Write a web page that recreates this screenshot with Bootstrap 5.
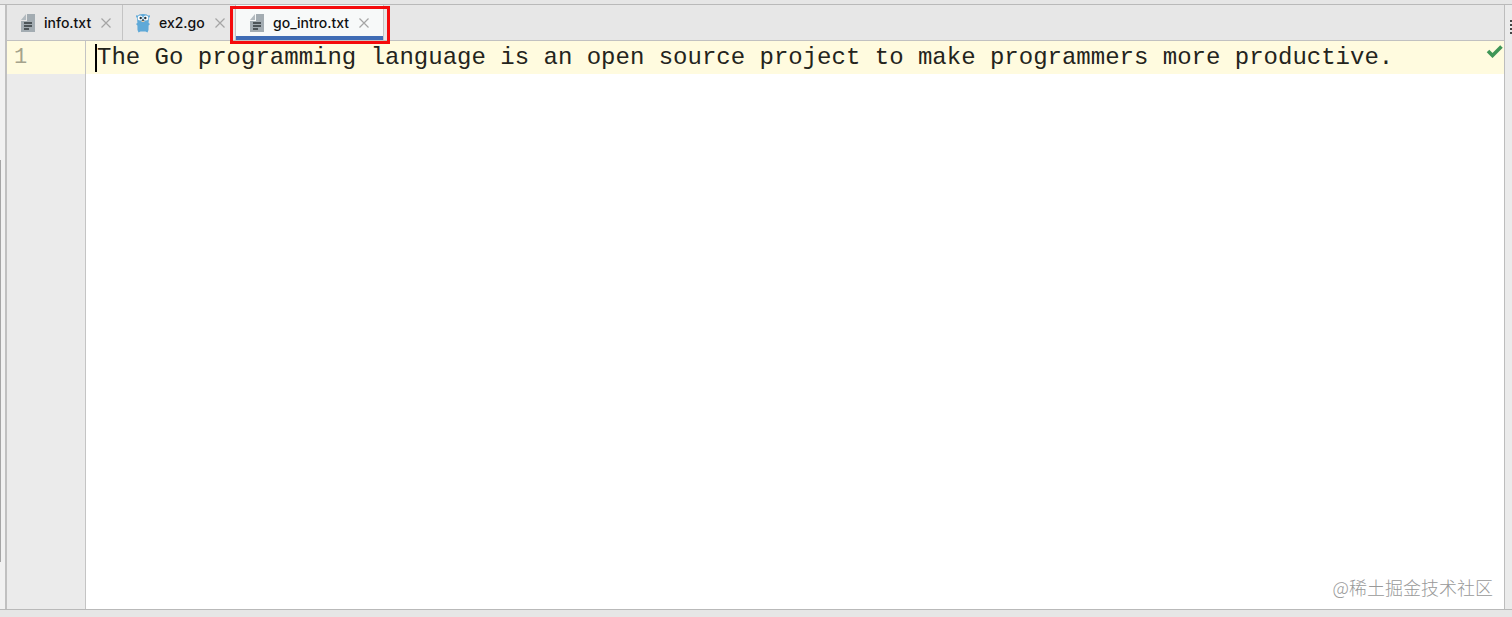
<!DOCTYPE html>
<html lang="en">
<head>
<meta charset="utf-8">
<meta name="viewport" content="width=device-width, initial-scale=1">
<title>go_intro.txt</title>
<link href="https://cdn.jsdelivr.net/npm/bootstrap@5.3.0/dist/css/bootstrap.min.css" rel="stylesheet">
<style>
  body { background: #e6e6e6; font-family: Inter, "Noto Sans CJK SC", sans-serif; color: #111; }
  .topline { height: 5px; border-bottom: 1px solid #b9b9b9; }
  .left-rail { width: 7px; background: #f1f1f1; border-right: 2px solid #c0c0c0; }
  .rail-thumb { width: 1px; margin-top: 155px; margin-bottom: 47px; background: #a5a5a5; }
  .right-rail { width: 8px; background: #ebebeb; border-left: 1px solid #bdbdbd; padding-top: 15px; }
  .bottomline { height: 8px; border-top: 1px solid #b9b9b9; }
  .tabs { height: 36px; border-bottom: 1px solid #c1c1c1; background: #e7e7e7; }
  .tab { gap: 8px; padding-left: 13px; border-right: 1px solid #c4c4c4; }
  .tab-info { width: 116px; }
  .tab-ex { width: 113px; padding-left: 12px; }
  .tab-intro { width: 148px; background: #f7f9f9; }
  .tab-intro::after { content: ""; position: absolute; inset: auto 0 0 0; height: 4px; background: #3f6cb5; }
  .highlight { position: absolute; inset: 1px -7px -4px -6px; border: 3px solid #f50a0c; z-index: 2; pointer-events: none; }
  .tab-name { font-size: 14px; line-height: 20px; font-weight: 500; color: #111; }
  .tab-close { color: #a5a5a5; line-height: 0; margin-left: 2px; }
  .gutter { width: 79px; background: #ebebeb; border-right: 1px solid #c4c4c4; font-size: 22px; color: #a5a38c; }
  .line-number { padding-left: 7px; }
  .mono { font-family: "Liberation Mono", monospace; line-height: 34px; }
  .current { background: #fffbdf; height: 33px; }
  .code { font-size: 24px; color: #24241c; }
  .caret { width: 2px; height: 28px; background: #000; margin-left: 9px; }
  .watermark { color: #999; font-size: 18px; line-height: 24px; font-family: "Noto Sans CJK SC", sans-serif; font-weight: 300; margin: 0 11px 10px; }
</style>
</head>
<body class="vh-100 d-flex flex-column overflow-hidden">
<svg class="d-none">
  <symbol id="file" viewBox="0 0 14 18">
    <path d="M6 0H14V18H0V7H6Z" fill="#a3acb2"/>
    <path d="M5 0V6H0Z" fill="#b2babf"/>
    <path d="M3 9H11M3 12H11M3 15H8" stroke="#32383c" stroke-width="1.6"/>
  </symbol>
  <symbol id="cross" viewBox="0 0 10 10"><path d="M0.5 0.5L9.5 9.5M9.5 0.5L0.5 9.5" stroke="currentColor" stroke-width="1.2"/></symbol>
</svg>
<div class="topline flex-shrink-0"></div>
<div class="d-flex flex-grow-1">
  <div class="left-rail d-flex flex-shrink-0"><div class="rail-thumb"></div></div>
  <main class="d-flex flex-column flex-grow-1 bg-white">
    <nav class="tabs d-flex flex-shrink-0" aria-label="Open files">
      <div class="tab tab-info d-flex align-items-center">
        <svg width="16" height="18"><use href="#file"/></svg>
        <a href="#" class="tab-name text-decoration-none">info.txt</a>
        <button class="tab-close btn p-0 border-0" aria-label="Close info.txt"><svg width="10" height="10"><use href="#cross"/></svg></button>
      </div>
      <div class="tab tab-ex d-flex align-items-center">
        <svg width="16" height="20" viewBox="0 0 16 20">
          <path d="M3 3Q3 1 8 1T13 3L14 2Q16 3 14 5L13.600 10L15 11L13.600 12.500L13.500 17L12.500 19.500L10.500 18.500H5.500L3.500 19.500L2.500 17L2.400 12.500L1 11L2.400 10L2 5Q0 3 2 2Z" fill="#5fa9d8"/>
          <circle cx="5.200" cy="5" r="2.500" fill="#fff"/><circle cx="10.800" cy="5" r="2.500" fill="#fff"/>
          <circle cx="5.700" cy="5" r="1.200" fill="#263740"/><circle cx="10.300" cy="5" r="1.200" fill="#263740"/>
          <path d="M6.500 7.500H9.500V9H6.500Z" fill="#e7c9a5"/><path d="M7 6.500H9V7.700H7Z" fill="#384247"/>
        </svg>
        <a href="#" class="tab-name text-decoration-none">ex2.go</a>
        <button class="tab-close btn p-0 border-0" aria-label="Close ex2.go"><svg width="10" height="10"><use href="#cross"/></svg></button>
      </div>
      <div class="tab tab-intro d-flex align-items-center position-relative">
        <svg width="16" height="18"><use href="#file"/></svg>
        <a href="#" class="tab-name text-decoration-none" aria-current="page">go_intro.txt</a>
        <button class="tab-close btn p-0 border-0" aria-label="Close go_intro.txt"><svg width="10" height="10"><use href="#cross"/></svg></button>
        <span class="highlight"></span>
      </div>
    </nav>
    <div class="d-flex flex-grow-1">
      <div class="gutter mono flex-shrink-0"><div class="current line-number">1</div></div>
      <div class="d-flex flex-column flex-grow-1">
        <div class="current code mono d-flex align-items-center text-nowrap">
          <span class="caret"></span><span>The Go programming language is an open source project to make programmers more productive.</span>
          <svg class="ms-auto align-self-start mt-1" width="18" height="13" viewBox="0 0 18 13"><path d="M2 6L6.500 10.500L15.500 1.500" fill="none" stroke="#3f9657" stroke-width="3.600"/></svg>
        </div>
        <div class="watermark mt-auto ms-auto">@稀土掘金技术社区</div>
      </div>
    </div>
  </main>
  <div class="right-rail flex-shrink-0 d-flex justify-content-end">
    <svg width="2" height="14"><path d="M1 0V14" stroke="#444" stroke-width="2" stroke-dasharray="2 2"/></svg>
  </div>
</div>
<div class="bottomline flex-shrink-0"></div>
<script src="https://cdn.jsdelivr.net/npm/bootstrap@5.3.0/dist/js/bootstrap.bundle.min.js"></script>
</body>
</html>
